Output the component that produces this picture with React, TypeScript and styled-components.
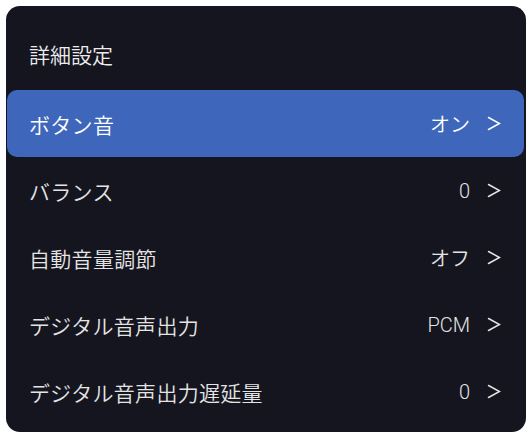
import styled, { createGlobalStyle } from 'styled-components';

const GlobalStyle = createGlobalStyle`
  html, body {
    margin: 0;
    padding: 0;
    background: #ffffff;
  }
  body {
    font-family: Roboto, "Noto Sans CJK JP", sans-serif;
    -webkit-font-smoothing: antialiased;
  }
`;

const Panel = styled.div`
  box-sizing: border-box;
  width: 520px;
  height: 426px;
  margin: 6px 0 0 6px;
  padding: 0 2px 7px 1px;
  background: #15151f;
  border-radius: 14px;
  display: flex;
  flex-direction: column;
`;

const Title = styled.div`
  height: 84px;
  display: flex;
  align-items: center;
  padding: 12px 0 0 22px;
  box-sizing: border-box;
  font-size: 21px;
  font-weight: 350;
  color: #ececec;
`;

const List = styled.div`
  display: flex;
  flex-direction: column;
`;

const Row = styled.div<{ $active?: boolean }>`
  height: 67px;
  display: flex;
  align-items: center;
  justify-content: space-between;
  padding: 0 23px 0 22px;
  border-radius: 10px;
  font-size: 21px;
  font-weight: 350;
  background: ${(p) => (p.$active ? '#3e67bb' : 'transparent')};
  color: ${(p) => (p.$active ? '#ffffff' : '#e4e4e4')};
`;

const Label = styled.span`
  letter-spacing: 0.3px;
`;

const Right = styled.div`
  display: flex;
  align-items: center;
  gap: 17px;
`;

const Value = styled.span`
  font-size: 20px;
  font-weight: 350;
`;

const Chevron = () => (
  <svg width="14" height="15" viewBox="0 0 14 15" fill="none">
    <polyline
      points="1.5,1.5 12.5,7.5 1.5,13.5"
      stroke="currentColor"
      strokeWidth="1.5"
      strokeLinejoin="miter"
      strokeLinecap="round"
    />
  </svg>
);

const items = [
  { label: 'ボタン音', value: 'オン', active: true },
  { label: 'バランス', value: '0' },
  { label: '自動音量調節', value: 'オフ' },
  { label: 'デジタル音声出力', value: 'PCM' },
  { label: 'デジタル音声出力遅延量', value: '0' },
];

export default function App() {
  return (
    <>
      <GlobalStyle />
      <Panel>
        <Title>詳細設定</Title>
        <List>
          {items.map((it) => (
            <Row key={it.label} $active={it.active}>
              <Label>{it.label}</Label>
              <Right>
                <Value>{it.value}</Value>
                <Chevron />
              </Right>
            </Row>
          ))}
        </List>
      </Panel>
    </>
  );
}
